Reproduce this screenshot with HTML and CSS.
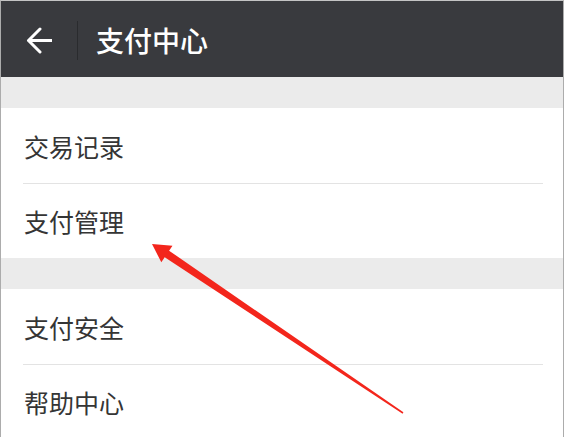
FILE: index.html
```html
<!DOCTYPE html>
<html lang="zh-CN">
<head>
<meta charset="utf-8">
<title>支付中心</title>
<link rel="stylesheet" href="styles.css">
</head>
<body>
<div class="frame">
  <header class="topbar">
    <span class="back">
      <svg width="26" height="27" viewBox="0 0 26 27" aria-hidden="true">
        <path d="M25.5 13.5H2.5M14 2L2.5 13.5L14 25" fill="none" stroke="#fff" stroke-width="3" stroke-linecap="round" stroke-linejoin="round"/>
      </svg>
    </span>
    <span class="sep"></span>
    <h1 class="title">支付中心</h1>
  </header>
  <div class="gap"></div>
  <ul class="group">
    <li class="row">交易记录</li>
    <li class="row">支付管理</li>
  </ul>
  <div class="gap"></div>
  <ul class="group">
    <li class="row">支付安全</li>
    <li class="row">帮助中心</li>
  </ul>
</div>
<svg class="annot" width="565" height="437" viewBox="0 0 565 437" aria-hidden="true">
  <polygon points="152,244 172.5,245.7 169.1,250.7 403.4,412.3 402.6,413.7 164.7,257.3 161.3,262.3" fill="#f3261c"/>
</svg>
</body>
</html>
```
FILE: styles.css
```css
html, body {
  margin: 0;
  padding: 0;
  background: #fff;
  overflow: hidden;
}
body {
  width: 565px;
  height: 437px;
  position: relative;
  font-family: "Noto Sans CJK SC", "Noto Sans", sans-serif;
}
.frame {
  width: 562px;
  height: 436px;
  border-top: 1px solid #c4c4c4;
  border-left: 1px solid #acacac;
  border-right: 1px solid #acacac;
  background: #fff;
  overflow: hidden;
}
.topbar {
  height: 76px;
  background: #393a3e;
  display: flex;
  align-items: center;
  padding-top: 2px;
  box-sizing: border-box;
}
.back {
  display: flex;
  margin-left: 25px;
  width: 26px;
  height: 27px;
}
.sep {
  width: 1px;
  height: 39px;
  background: #2a2b2e;
  margin-left: 25px;
}
.title {
  margin: 0 0 0 18px;
  color: #fff;
  font-size: 28px;
  font-weight: 500;
  line-height: 1;
}
.gap {
  height: 31px;
  background: #ebebeb;
}
.group {
  list-style: none;
  margin: 0;
  padding: 0;
  background: #fff;
}
.row {
  height: 74px;
  display: flex;
  align-items: center;
  margin: 0 20px 0 22px;
  padding-left: 1px;
  font-size: 25px;
  color: #353535;
  line-height: 1;
}
.row + .row {
  border-top: 1px solid #e3e3e3;
}
.group .row:first-child {
  height: 75px;
  padding-top: 1px;
  box-sizing: border-box;
}
.annot {
  position: absolute;
  left: 0;
  top: 0;
  pointer-events: none;
}
```
